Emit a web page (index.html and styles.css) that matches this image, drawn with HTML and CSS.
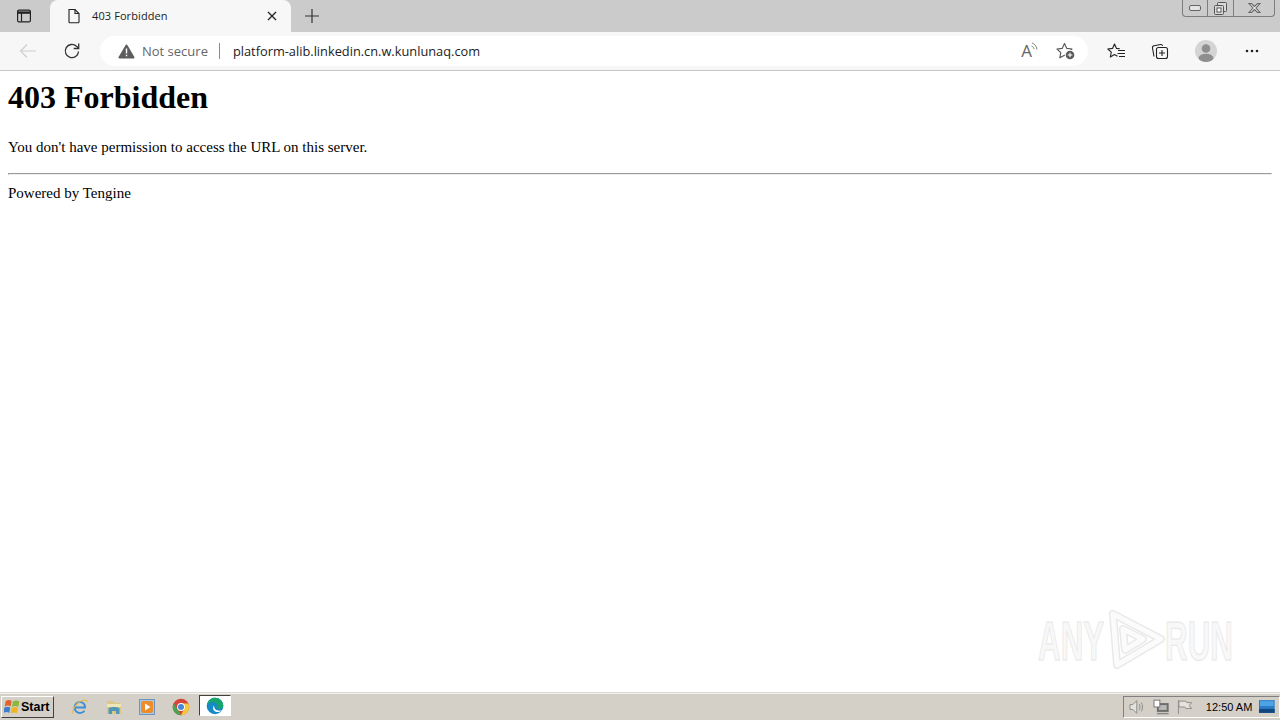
FILE: index.html
```html
<!DOCTYPE html>
<html lang="en">
  <head>
    <meta charset="UTF-8" />
    <title>403 Forbidden</title>
    <link rel="stylesheet" href="styles.css">
  </head>
  <body>
    <div class="browser">
      <div class="tabstrip">
        <div class="tab_menu">
          <svg width="16" height="16" viewBox="0 0 16 16" fill="none" stroke="#222" stroke-width="1.2">
            <rect x="1.6" y="2.1" width="12.8" height="11.8" rx="1.5"/>
            <path d="M1.6 4.6h12.8" stroke-width="2.4"/>
            <path d="M5.5 5v8.5"/>
          </svg>
        </div>
        <div class="tab">
          <svg width="14" height="16" viewBox="0 0 14 16" fill="none" stroke="#222" stroke-width="1.1">
            <path d="M2 1.5h6l4 4v8.2a1 1 0 0 1-1 1H3a1 1 0 0 1-1-1z"/>
            <path d="M8 1.5v4h4"/>
          </svg>
          <span class="tab_title">403 Forbidden</span>
          <svg class="tab_close" width="10" height="10" viewBox="0 0 10 10" stroke="#222" stroke-width="1.3">
            <path d="M1 1l8 8M9 1l-8 8"/>
          </svg>
        </div>
        <div class="new_tab">
          <svg width="16" height="16" viewBox="0 0 16 16" stroke="#333" stroke-width="1.2">
            <path d="M8 1v14M1 8h14"/>
          </svg>
        </div>
        <div class="win_controls">
          <div class="win_btn win_min">
            <svg width="12" height="6" viewBox="0 0 12 6" fill="#e4e4e4" stroke="#666"><rect x="0.5" y="0.5" width="11" height="5" rx="1.5"/></svg>
          </div>
          <div class="win_btn win_max">
            <svg width="13" height="13" viewBox="0 0 13 13" fill="#d8d8d8" stroke="#555">
              <rect x="3.5" y="0.5" width="9" height="9" rx="1"/>
              <rect x="0.5" y="3.5" width="9" height="9" rx="1"/>
              <rect x="3" y="6" width="4" height="4" fill="#fff"/>
            </svg>
          </div>
          <div class="win_btn win_close">
            <svg width="13" height="10" viewBox="0 0 13 10" stroke="#666" stroke-width="1.1">
              <path d="M1 .5h2.4l3.1 3 3.1-3H12L8 5l4 4.5H9.6l-3.1-3-3.1 3H1L5 5z" fill="#eee"/>
            </svg>
          </div>
        </div>
      </div>

      <div class="toolbar">
        <div class="nav_btn">
          <svg width="18" height="16" viewBox="0 0 18 16" fill="none" stroke="#cfcfcf" stroke-width="1.2">
            <path d="M17 8H1.5M8 1.5L1.5 8 8 14.5"/>
          </svg>
        </div>
        <div class="nav_btn">
          <svg width="18" height="18" viewBox="0 0 18 18" fill="none" stroke="#333" stroke-width="1.3">
            <path d="M15.5 9.500a6.600 6.600 0 1 1-2-5.200L15.5 6"/>
            <path d="M15.700 1.500v5h-5"/>
          </svg>
        </div>
        <div class="address">
          <svg class="warn" width="17" height="15" viewBox="0 0 17 15">
            <path d="M8.500 .6a1.100 1.100 0 0 1 1 .6l6.900 11.800a1 1 0 0 1-.9 1.500H1.500a1 1 0 0 1-.9-1.500L7.500 1.200a1.100 1.100 0 0 1 1-.6z" fill="#5c5c5c"/>
            <path d="M7.800 4.500h1.400v5H7.800zM7.800 10.800h1.400v1.500H7.800z" fill="#fff"/>
          </svg>
          <span class="not_secure">Not secure</span>
          <span class="addr_sep"></span>
          <span class="url">platform-alib.linkedin.cn.w.kunlunaq.com</span>
          <div class="addr_icons">
            <div class="read_aloud">
              <span class="read_a">A</span>
              <svg width="7" height="9" viewBox="0 0 7 9" fill="none" stroke="#777" stroke-width="0.9">
                <path d="M1 1c2.500.8 4.500 3 5 6.500M.5 4c1.300.5 2.200 1.500 2.600 3"/>
              </svg>
            </div>
            <svg width="20" height="19" viewBox="0 0 20 19" fill="none" stroke="#555" stroke-width="1.1">
              <path d="M8.500 1.500l2.300 4.900 5.200.6-3.800 3.600 1 5.200-4.700-2.600-4.700 2.600 1-5.200L1 7l5.200-.6z" stroke-linejoin="round"/>
              <circle cx="14" cy="13" r="5.300" fill="#fff" stroke="none"/>
              <circle cx="14" cy="13" r="4.300" fill="#5a5a5a" stroke="none"/>
              <path d="M14 10.700v4.600M11.700 13h4.600" stroke="#fff"/>
            </svg>
          </div>
        </div>
        <div class="tool_btns">
          <div class="tool_btn">
            <svg width="19" height="17" viewBox="0 0 19 17" fill="none" stroke="#222" stroke-width="1.1">
              <path d="M12.800 5.800L9.500 5.400 7.500 1 5.500 5.400.8 6l3.500 3.200-1 4.800 4.200-2.500 3 1.800" stroke-linejoin="round"/>
              <path d="M11 7.500h7M10.500 10.500h7.500M12 13.500h6"/>
            </svg>
          </div>
          <div class="tool_btn">
            <svg width="18" height="18" viewBox="0 0 18 18" fill="none" stroke="#222" stroke-width="1.1">
              <path d="M3 14.500L1.500 6a2 2 0 0 1 1.600-2.300L9.500 2.500a2 2 0 0 1 2.200 1.300"/>
              <rect x="5.500" y="5.500" width="11" height="11" rx="2" fill="#f7f7f7"/>
              <path d="M11 8v6M8 11h6"/>
            </svg>
          </div>
          <div class="tool_btn tool_wide tool_avatar">
            <div class="avatar">
              <svg width="22" height="22" viewBox="0 0 22 22">
                <circle cx="11" cy="8.500" r="4.300" fill="#8f8f8f"/>
                <ellipse cx="11" cy="18" rx="7.500" ry="4.300" fill="#8f8f8f"/>
              </svg>
            </div>
          </div>
          <div class="tool_btn tool_wide">
            <svg width="14" height="4" viewBox="0 0 14 4" fill="#222">
              <circle cx="2" cy="2" r="1.300"/><circle cx="7" cy="2" r="1.300"/><circle cx="12" cy="2" r="1.300"/>
            </svg>
          </div>
        </div>
      </div>

      <div class="page">
        <h1>403 Forbidden</h1>
        <p>You don't have permission to access the URL on this server.</p>
        <hr />
        Powered by Tengine
      </div>

      <div class="watermark">
        <span class="wm_any">ANY</span>
        <svg width="60" height="62" viewBox="0 0 60 62" fill="none" stroke-linejoin="round">
          <g stroke="#e9e9e9" stroke-width="8">
            <path d="M6 6L54 31 10 57z"/>
            <path d="M16 21l20 10-18 11z"/>
          </g>
          <g stroke="#fbfbfb" stroke-width="5">
            <path d="M6 6L54 31 10 57z"/>
            <path d="M16 21l20 10-18 11z"/>
          </g>
        </svg>
        <span class="wm_run">RUN</span>
      </div>

      <div class="taskbar">
        <div class="start_btn">
          <svg width="16" height="16" viewBox="0.5 2 13.500 12">
            <path d="M2 3c2-1.200 3.500-1 5 0L6 7.500C4.500 6.500 3 6.400 1 7.500z" fill="#e2622b"/>
            <path d="M8 3.300c2-1 3.300-1 5.500 0L12.500 8c-2-1-3.500-1-5.300-.1z" fill="#8db63c"/>
            <path d="M.8 8.500c2-1 3.500-1 5 0L5 13c-1.500-1-3-1-5 0z" fill="#3f7fc9"/>
            <path d="M7 8.800c2-1 3.300-1 5.300 0l-1 4.500c-2-1-3.300-1-5.200 0z" fill="#eeb422"/>
          </svg>
          <span>Start</span>
        </div>
        <div class="quick">
          <div class="quick_item">
            <svg width="18" height="18" viewBox="0 0 18 18" fill="none">
              <path d="M4.500 9.500h9.500c0-3.500-2.200-5.500-5-5.500-3 0-5.500 2.500-5.500 5.500s2.500 5.500 5.500 5.500c2 0 3.500-.8 4.500-2.300" stroke="#3a8fd6" stroke-width="2"/>
              <path d="M2 15.500C1 13 4 6 9 3.500c3.500-1.800 7-2.300 7 .5" stroke="#e8b93c" stroke-width="1.100"/>
            </svg>
          </div>
          <div class="quick_item">
            <svg width="18" height="18" viewBox="0 0 18 18">
              <path d="M2 3h6l1.500 2H16v11H2z" fill="#dcc884"/>
              <path d="M2 6h14v3H2z" fill="#efe6b8"/>
              <path d="M3.500 10c3-1.500 8-1.500 11 0v6h-3.500v-3H7v3H3.500z" fill="#4f97bb"/>
            </svg>
          </div>
          <div class="quick_item">
            <div class="media_icon">
              <svg width="12" height="12" viewBox="0 0 12 12">
                <rect width="12" height="12" rx="2" fill="#ec8d2a"/>
                <path d="M4 2.500l5.500 3.500L4 9.500z" fill="#fff"/>
              </svg>
            </div>
          </div>
          <div class="quick_item">
            <svg width="18" height="18" viewBox="0 0 18 18">
              <circle cx="9" cy="9" r="8.300" fill="#d9443a"/>
              <path d="M1.700 5l3.800 6.500L9 17.300a8.300 8.300 0 0 1-7.300-12.300z" fill="#4aa552"/>
              <path d="M9 5.500h7.400A8.300 8.300 0 0 1 9 17.300L12 11z" fill="#f5c93e"/>
              <circle cx="9" cy="9" r="3.900" fill="#fff"/>
              <circle cx="9" cy="9" r="3" fill="#4a86d8"/>
            </svg>
          </div>
          <div class="quick_item active_app">
            <svg width="18" height="18" viewBox="0 0 18 18">
              <circle cx="9" cy="9" r="8.300" fill="#1689c9"/>
              <path d="M1 8C2 3 5.500.7 9 .7c4.500 0 8.300 3.500 8.300 8 0 2-2 3-4 3-1.500 0-3-.5-2.800-1.200.5-1 1-1.500.5-3C10.500 6 9 5 7.500 5 4.500 5 2 6 1 8z" fill="#17a56c"/>
              <path d="M8 8.500c-2 2.500-.5 6 3 6.500 2 .3 4-.5 5-2-3 1.500-8 .5-8-4.500z" fill="#fff"/>
            </svg>
          </div>
        </div>
        <div class="tray">
          <svg width="18" height="16" viewBox="0 0 18 16" fill="#e6e3dc" stroke="#8c8c8c">
            <path d="M2 5.500h3l4-4v13l-4-4H2z"/>
            <path d="M11.500 5c1 1.800 1 4.200 0 6M13.500 3.500c1.800 2.700 1.800 6.300 0 9" fill="none"/>
          </svg>
          <svg width="17" height="16" viewBox="0 0 17 16">
            <rect x="4" y="4" width="12" height="9" fill="#6d6d6d"/>
            <rect x="6" y="6" width="8" height="5" fill="#b9b9b9"/>
            <rect x="1" y="1" width="6" height="7" fill="#fff" stroke="#777"/>
            <rect x="4" y="14" width="12" height="1.500" fill="#888"/>
          </svg>
          <svg width="17" height="16" viewBox="0 0 17 16" fill="#e6e3dc" stroke="#8c8c8c">
            <path d="M2.500 1v14"/>
            <path d="M3 2h7l1 1.500h5l-2.500 3 2.500 3h-6l-1-1.500H3z"/>
          </svg>
          <span class="clock">12:50 AM</span>
          <svg width="16" height="14" viewBox="0 0 16 14">
            <rect width="16" height="13" fill="#2a7bc4"/>
            <rect y="9" width="16" height="4" fill="#12487e"/>
            <rect x="1" y="1" width="14" height="5" fill="#4da3e6"/>
          </svg>
        </div>
      </div>
    </div>
  </body>
</html>
```

FILE: styles.css
```css
body {
  margin: 0;
  overflow: hidden;
}

.browser {
  position: relative;
  height: 720px;
  width: 1280px;
  display: flex;
  flex-direction: column;
  background: white;
}

.tabstrip {
  height: 32px;
  flex: none;
  display: flex;
  align-items: flex-end;
  background: #cbcbcb;
  font-family: "Open Sans", sans-serif;
}

.tab_menu {
  width: 50px;
  height: 32px;
  display: flex;
  align-items: center;
  justify-content: center;
  box-sizing: border-box;
  padding-right: 3px;
}

.tab {
  width: 241px;
  height: 32px;
  box-sizing: border-box;
  padding: 0 14px 0 17px;
  display: flex;
  align-items: center;
  background: #f7f7f7;
  border-radius: 8px 8px 0 0;
}

.tab_title {
  flex: 1;
  margin-left: 11px;
  padding-bottom: 2px;
  font-size: 11px;
  color: #222;
  letter-spacing: 0.1px;
}

.new_tab {
  width: 42px;
  height: 32px;
  display: flex;
  align-items: center;
  justify-content: center;
}

.win_controls {
  margin-left: auto;
  margin-right: 5px;
  align-self: flex-start;
  display: flex;
  height: 16px;
  border: 1px solid #7d7d7d;
  border-top: none;
  border-radius: 0 0 4px 4px;
  overflow: hidden;
}

.win_btn {
  display: flex;
  align-items: center;
  justify-content: center;
  border-left: 1px solid #7d7d7d;
}

.win_min {
  width: 24px;
  border-left: none;
}

.win_max {
  width: 25px;
}

.win_close {
  width: 40px;
}

.toolbar {
  height: 38px;
  flex: none;
  display: flex;
  align-items: center;
  background: #f7f7f7;
  border-bottom: 1px solid #c6c6c6;
  font-family: "Open Sans", sans-serif;
}

.nav_btn {
  width: 44px;
  display: flex;
  justify-content: center;
}

.nav_btn:first-child {
  margin-left: 6px;
}

.address {
  width: 988px;
  height: 30px;
  margin-left: 6px;
  box-sizing: border-box;
  padding: 0 12px 0 18px;
  display: flex;
  align-items: center;
  background: white;
  border-radius: 15px;
}

.not_secure {
  margin-left: 7px;
  font-size: 13px;
  color: #666;
}

.addr_sep {
  width: 1px;
  height: 16px;
  margin: 0 13px 0 11px;
  background: #8a8a8a;
}

.url {
  flex: 1;
  font-size: 12.8px;
  color: #222;
}

.addr_icons {
  display: flex;
  align-items: center;
  gap: 18px;
}

.read_aloud {
  display: flex;
  align-items: flex-start;
  color: #666;
  font-size: 17px;
  line-height: 18px;
}

.read_aloud svg {
  margin-left: -1px;
}

.tool_btns {
  display: flex;
  margin-left: 6px;
}

.tool_btn {
  width: 44px;
  display: flex;
  align-items: center;
  justify-content: center;
}

.tool_wide {
  width: 46px;
}

.tool_avatar {
  margin-left: 1px;
}

.avatar {
  width: 22px;
  height: 22px;
  border-radius: 50%;
  background: #d4d4d4;
  overflow: hidden;
}

.page {
  flex: 1;
  padding: 0 8px;
  font-family: "Liberation Serif", serif;
  font-size: 15px;
  color: black;
}

.page h1 {
  margin: 8px 0 23px;
  font-size: 32px;
}

.page p {
  margin: 0 0 17px;
}

.page hr {
  margin: 0 0 10px;
}

.watermark {
  position: absolute;
  left: 1038px;
  top: 608px;
  display: flex;
  align-items: center;
  font-family: "Liberation Sans", sans-serif;
  font-size: 56px;
  font-weight: bold;
  color: #f8f8f8;
  -webkit-text-stroke: 1px #e6e6e6;
}

.watermark svg {
  margin: -4px -2px 0 3px;
}

.wm_any,
.wm_run {
  display: block;
  transform: scaleX(0.56);
  transform-origin: left center;
}

.wm_any {
  width: 66px;
}

.wm_run {
  width: 69px;
}

.taskbar {
  height: 26px;
  flex: none;
  display: flex;
  align-items: center;
  background: #d4d0c8;
  border-top: 1px solid #f4f2ec;
  box-shadow: 0 -1px 0 #dcd9d2;
}

.start_btn {
  width: 53px;
  height: 22px;
  margin-left: 1px;
  box-sizing: border-box;
  display: flex;
  align-items: center;
  gap: 1px;
  padding-left: 2px;
  background: #d4d0c8;
  border: 1px solid;
  border-color: #fff #404040 #404040 #fff;
  font-family: "Liberation Sans", sans-serif;
  font-size: 12.5px;
  font-weight: bold;
  color: black;
}

.quick {
  display: flex;
  margin-left: 9px;
}

.quick_item {
  width: 33.75px;
  height: 24px;
  display: flex;
  align-items: center;
  justify-content: center;
}

.media_icon {
  padding: 1px;
  background: #a8c8e8;
  border: 1px solid #6f93bb;
  display: flex;
}

.active_app {
  width: 30px;
  height: 19px;
  margin-left: 1px;
  background: white;
  border: 1px solid;
  border-color: #404040 #fff #fff #404040;
}

.tray {
  margin-left: auto;
  height: 22px;
  width: 157px;
  box-sizing: border-box;
  padding: 0 4px 0 4px;
  display: flex;
  align-items: center;
  gap: 7px;
  border: 1px solid;
  border-color: #808080 #fff #fff #808080;
}

.clock {
  margin-left: 6px;
  margin-right: auto;
  white-space: nowrap;
  font-family: "Liberation Sans", sans-serif;
  font-size: 11px;
  color: black;
}
```
